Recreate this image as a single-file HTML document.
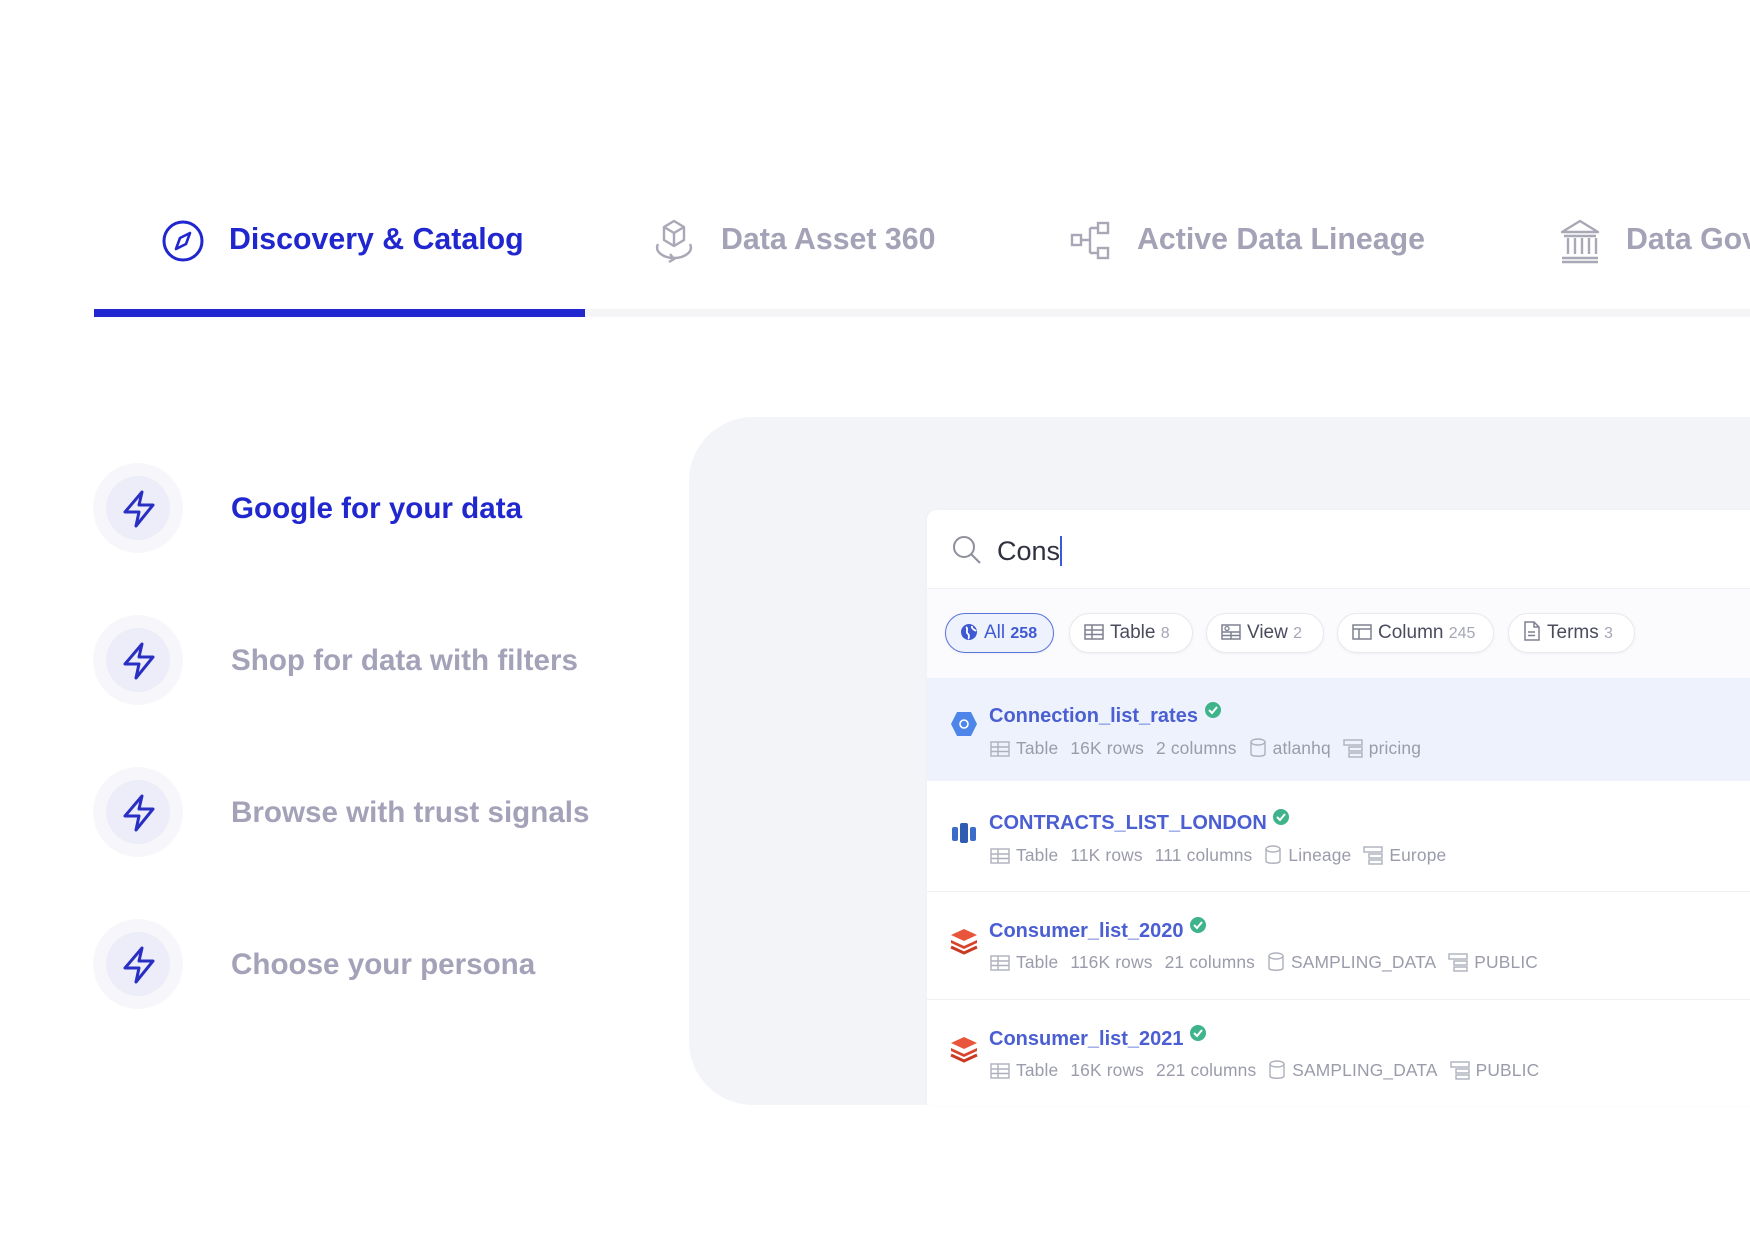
<!DOCTYPE html>
<html><head><meta charset="utf-8"><style>
*{margin:0;padding:0;box-sizing:border-box}
body{width:1750px;height:1242px;background:#fff;position:relative;overflow:hidden;font-family:"Liberation Sans",sans-serif}
.abs{position:absolute}
.tab{position:absolute;top:220px;font-size:30.3px;font-weight:bold;color:#a3a2b6;white-space:nowrap;line-height:40px}
.ic{position:absolute}
.item{position:absolute;left:231px;font-size:29.6px;font-weight:bold;color:#a3a2b8;line-height:40px}
.circ{position:absolute;left:93px;width:90px;height:90px;border-radius:50%;background:#f7f7fb}
.circ div{position:absolute;left:13px;top:13px;width:64px;height:64px;border-radius:50%;background:#ecedf9}
.circ svg{position:absolute;left:28px;top:27px}
.chip{position:absolute;top:613px;height:40px;border:1.5px solid #e8e9ee;border-radius:20px;background:#fff;font-size:19px;color:#4a4c5e;line-height:37px;padding-left:14px;white-space:nowrap;box-shadow:0 1px 3px rgba(0,0,0,.05)}
.chip span{color:#a5a7b5;font-size:16px}
.chip svg{vertical-align:-3px;margin-right:6px}
.title{position:absolute;left:989px;font-size:20px;color:#4b5fd3;font-weight:bold;line-height:24px}
.meta{position:absolute;left:990px;font-size:17.4px;color:#9a9cab;line-height:22px;white-space:nowrap;letter-spacing:0.15px}
.meta svg{vertical-align:-4px;margin-right:6px}
.meta b{font-weight:normal;margin-right:12px}
.sep{position:absolute;left:927px;right:0;height:1px;background:#eef0f3}
</style></head><body>

<svg class="ic" style="left:161px;top:219px" width="44" height="44" viewBox="0 0 44 44"><circle cx="22" cy="22" r="19" fill="none" stroke="#2127cf" stroke-width="3"/><path d="M29 14 L25 25 L15 30 L19 19 Z" fill="none" stroke="#2127cf" stroke-width="2.6" stroke-linejoin="round"/></svg>
<div class="tab" style="left:229px;color:#2127cf">Discovery &amp; Catalog</div>

<svg class="ic" style="left:650px;top:218px" width="48" height="46" viewBox="0 0 48 46"><path d="M24 3 L34 9 L34 22 L24 28 L14 22 L14 9 Z M14 9 L24 15 L34 9 M24 15 L24 28" fill="none" stroke="#a8a8b6" stroke-width="2.4" stroke-linejoin="round"/><path d="M8 26 C4 34 14 40 24 40 C34 40 44 34 40 26 M20 36 L24 41 L19 44" fill="none" stroke="#a8a8b6" stroke-width="2.4"/></svg>
<div class="tab" style="left:721px">Data Asset 360</div>

<svg class="ic" style="left:1070px;top:220px" width="42" height="42" viewBox="0 0 42 42"><rect x="2" y="15" width="9" height="10" fill="none" stroke="#a8a8b6" stroke-width="2.4"/><rect x="28" y="3" width="10" height="10" fill="none" stroke="#a8a8b6" stroke-width="2.4"/><rect x="28" y="28" width="10" height="10" fill="none" stroke="#a8a8b6" stroke-width="2.4"/><path d="M11 20 H20 M20 8 V33 M20 8 H28 M20 33 H28" fill="none" stroke="#a8a8b6" stroke-width="2.4"/></svg>
<div class="tab" style="left:1137px">Active Data Lineage</div>

<svg class="ic" style="left:1558px;top:218px" width="44" height="46" viewBox="0 0 44 46"><path d="M22 3 L40 14 H4 Z" fill="none" stroke="#a8a8b6" stroke-width="2.4" stroke-linejoin="round"/><path d="M6 18 H38 M10 20 V36 M17 20 V36 M24 20 V36 M31 20 V36 M38 20 V36 M4 40 H40 M4 44 H40" stroke="#a8a8b6" stroke-width="2.4"/></svg>
<div class="tab" style="left:1626px">Data Gov</div>

<div class="abs" style="left:585px;right:0;top:309px;height:8px;background:#f5f5f8"></div>
<div class="abs" style="left:94px;width:491px;top:309px;height:8px;background:#2127cf"></div>

<div class="circ" style="top:463px"><div></div><svg width="36" height="38" viewBox="0 0 36 38"><path d="M21 2 L4 22 H18 L15 36 L32 15 H18 Z" fill="none" stroke="#2a2fc4" stroke-width="3" stroke-linejoin="round"/></svg></div>
<div class="item" style="top:489px;color:#2127cf">Google for your data</div>
<div class="circ" style="top:615px"><div></div><svg width="36" height="38" viewBox="0 0 36 38"><path d="M21 2 L4 22 H18 L15 36 L32 15 H18 Z" fill="none" stroke="#2a2fc4" stroke-width="3" stroke-linejoin="round"/></svg></div>
<div class="item" style="top:641px">Shop for data with filters</div>
<div class="circ" style="top:767px"><div></div><svg width="36" height="38" viewBox="0 0 36 38"><path d="M21 2 L4 22 H18 L15 36 L32 15 H18 Z" fill="none" stroke="#2a2fc4" stroke-width="3" stroke-linejoin="round"/></svg></div>
<div class="item" style="top:793px">Browse with trust signals</div>
<div class="circ" style="top:919px"><div></div><svg width="36" height="38" viewBox="0 0 36 38"><path d="M21 2 L4 22 H18 L15 36 L32 15 H18 Z" fill="none" stroke="#2a2fc4" stroke-width="3" stroke-linejoin="round"/></svg></div>
<div class="item" style="top:945px">Choose your persona</div>

<div class="abs" style="left:689px;top:417px;width:1200px;height:688px;background:#f3f4f8;border-radius:64px 0 0 64px"></div>
<div class="abs" style="left:927px;top:510px;width:900px;height:595px;background:#fff;border-radius:10px 0 0 0;box-shadow:0 0 4px rgba(0,0,0,.03)"></div>
<div class="abs" style="left:927px;top:588px;right:0;height:90px;background:#fbfbfd;border-top:1px solid #f0f1f4"></div>
<svg class="ic" style="left:951px;top:534px" width="32" height="32" viewBox="0 0 32 32"><circle cx="13" cy="13" r="10" fill="none" stroke="#8e8f9c" stroke-width="2"/><path d="M20.5 20.5 L29 29" stroke="#8e8f9c" stroke-width="2"/></svg>
<div class="abs" style="left:997px;top:533px;font-size:27px;color:#2f3140;line-height:36px">Cons<span style="display:inline-block;width:2px;height:30px;background:#3a5bd8;vertical-align:-6px"></span></div>

<div class="chip" style="left:945px;width:109px;border-color:#5a73dc;background:#eef2fd;color:#3f59d4">
<svg width="18" height="18" viewBox="0 0 18 18"><circle cx="9" cy="9" r="8" fill="#3f59d4"/><path d="M6 4 C9 6 5 9 8 11 C10 12 8 15 9 16 M12 3 C11 6 15 7 16 8" stroke="#fff" stroke-width="1.8" fill="none"/></svg>All <span style="color:#3f59d4;font-weight:bold">258</span></div>
<div class="chip" style="left:1069px;width:124px"><svg width="20" height="18" viewBox="0 0 20 18"><rect x="1" y="2" width="18" height="14" fill="none" stroke="#7e8091" stroke-width="1.5"/><path d="M1 7 H19 M1 11.5 H19 M8 2 V16" stroke="#7e8091" stroke-width="1.5"/></svg>Table <span>8</span></div>
<div class="chip" style="left:1206px;width:118px"><svg width="20" height="18" viewBox="0 0 20 18"><rect x="1" y="2" width="18" height="14" fill="none" stroke="#7e8091" stroke-width="1.5"/><path d="M1 9 H19 M10 9 V16 M1 12.5 H19" stroke="#7e8091" stroke-width="1.5"/><circle cx="6" cy="5.5" r="2" fill="none" stroke="#7e8091" stroke-width="1.3"/></svg>View <span>2</span></div>
<div class="chip" style="left:1337px;width:157px"><svg width="20" height="18" viewBox="0 0 20 18"><rect x="1" y="2" width="18" height="14" fill="none" stroke="#7e8091" stroke-width="1.5"/><path d="M1 6 H19 M7 6 V16" stroke="#7e8091" stroke-width="1.5"/></svg>Column <span>245</span></div>
<div class="chip" style="left:1508px;width:127px"><svg width="18" height="20" viewBox="0 0 18 20"><path d="M2 1 H11 L16 6 V19 H2 Z M11 1 V6 H16 M5 11 H12 M5 14.5 H12" fill="none" stroke="#7e8091" stroke-width="1.5"/></svg>Terms <span>3</span></div>

<div class="abs" style="left:927px;top:678px;right:0;height:103px;background:#eef2fc"></div>
<div class="sep" style="top:891px"></div>
<div class="sep" style="top:999px"></div>

<svg class="ic" style="left:950px;top:710px" width="28" height="28" viewBox="0 0 28 28"><path d="M7 2 H21 L27 14 L21 26 H7 L1 14 Z" fill="#4d86e8"/><circle cx="14" cy="14" r="4" fill="none" stroke="#fff" stroke-width="1.6"/></svg>
<div class="title" style="top:701px">Connection_list_rates <svg width="18" height="18" viewBox="0 0 18 18" style="vertical-align:3px"><circle cx="9" cy="9" r="8" fill="#3fb38a"/><path d="M5 9 L8 12 L13 6" stroke="#fff" stroke-width="2" fill="none"/></svg></div>
<div class="meta" style="top:737px"><svg width="20" height="18" viewBox="0 0 20 18"><rect x="1" y="2" width="18" height="14" fill="none" stroke="#aeb0bd" stroke-width="1.4"/><path d="M1 7 H19 M1 11.5 H19 M8 2 V16" stroke="#aeb0bd" stroke-width="1.4"/></svg><b>Table</b><b>16K rows</b><b>2 columns</b><svg width="18" height="20" viewBox="0 0 18 20"><ellipse cx="9" cy="4" rx="7" ry="3" fill="none" stroke="#aeb0bd" stroke-width="1.4"/><path d="M2 4 V16 C2 19 16 19 16 16 V4" fill="none" stroke="#aeb0bd" stroke-width="1.4"/></svg><b>atlanhq</b><svg width="20" height="20" viewBox="0 0 20 20"><rect x="1" y="2" width="18" height="5" fill="none" stroke="#aeb0bd" stroke-width="1.4"/><rect x="6" y="9" width="13" height="4" fill="none" stroke="#aeb0bd" stroke-width="1.4"/><rect x="6" y="15" width="13" height="4" fill="none" stroke="#aeb0bd" stroke-width="1.4"/></svg><b>pricing</b></div>

<svg class="ic" style="left:951px;top:820px" width="26" height="26" viewBox="0 0 26 26"><rect x="1" y="7" width="6" height="14" rx="2" fill="#3b6cc9"/><rect x="9" y="3" width="8" height="20" rx="2" fill="#2f5bb0"/><rect x="19" y="7" width="6" height="14" rx="2" fill="#3b6cc9"/></svg>
<div class="title" style="top:808px">CONTRACTS_LIST_LONDON <svg width="18" height="18" viewBox="0 0 18 18" style="vertical-align:3px"><circle cx="9" cy="9" r="8" fill="#3fb38a"/><path d="M5 9 L8 12 L13 6" stroke="#fff" stroke-width="2" fill="none"/></svg></div>
<div class="meta" style="top:844px"><svg width="20" height="18" viewBox="0 0 20 18"><rect x="1" y="2" width="18" height="14" fill="none" stroke="#aeb0bd" stroke-width="1.4"/><path d="M1 7 H19 M1 11.5 H19 M8 2 V16" stroke="#aeb0bd" stroke-width="1.4"/></svg><b>Table</b><b>11K rows</b><b>111 columns</b><svg width="18" height="20" viewBox="0 0 18 20"><ellipse cx="9" cy="4" rx="7" ry="3" fill="none" stroke="#aeb0bd" stroke-width="1.4"/><path d="M2 4 V16 C2 19 16 19 16 16 V4" fill="none" stroke="#aeb0bd" stroke-width="1.4"/></svg><b>Lineage</b><svg width="20" height="20" viewBox="0 0 20 20"><rect x="1" y="2" width="18" height="5" fill="none" stroke="#aeb0bd" stroke-width="1.4"/><rect x="6" y="9" width="13" height="4" fill="none" stroke="#aeb0bd" stroke-width="1.4"/><rect x="6" y="15" width="13" height="4" fill="none" stroke="#aeb0bd" stroke-width="1.4"/></svg><b>Europe</b></div>

<svg class="ic" style="left:950px;top:927px" width="28" height="28" viewBox="0 0 28 28"><path d="M14 2 L27 8 L14 14 L1 8 Z" fill="#e8553a"/><path d="M1 13 L14 19 L27 13 L27 16 L14 22 L1 16 Z" fill="#d9442b"/><path d="M1 20 L14 26 L27 20" fill="none" stroke="#c93a22" stroke-width="3"/></svg>
<div class="title" style="top:916px">Consumer_list_2020 <svg width="18" height="18" viewBox="0 0 18 18" style="vertical-align:3px"><circle cx="9" cy="9" r="8" fill="#3fb38a"/><path d="M5 9 L8 12 L13 6" stroke="#fff" stroke-width="2" fill="none"/></svg></div>
<div class="meta" style="top:951px"><svg width="20" height="18" viewBox="0 0 20 18"><rect x="1" y="2" width="18" height="14" fill="none" stroke="#aeb0bd" stroke-width="1.4"/><path d="M1 7 H19 M1 11.5 H19 M8 2 V16" stroke="#aeb0bd" stroke-width="1.4"/></svg><b>Table</b><b>116K rows</b><b>21 columns</b><svg width="18" height="20" viewBox="0 0 18 20"><ellipse cx="9" cy="4" rx="7" ry="3" fill="none" stroke="#aeb0bd" stroke-width="1.4"/><path d="M2 4 V16 C2 19 16 19 16 16 V4" fill="none" stroke="#aeb0bd" stroke-width="1.4"/></svg><b>SAMPLING_DATA</b><svg width="20" height="20" viewBox="0 0 20 20"><rect x="1" y="2" width="18" height="5" fill="none" stroke="#aeb0bd" stroke-width="1.4"/><rect x="6" y="9" width="13" height="4" fill="none" stroke="#aeb0bd" stroke-width="1.4"/><rect x="6" y="15" width="13" height="4" fill="none" stroke="#aeb0bd" stroke-width="1.4"/></svg><b>PUBLIC</b></div>

<svg class="ic" style="left:950px;top:1035px" width="28" height="28" viewBox="0 0 28 28"><path d="M14 2 L27 8 L14 14 L1 8 Z" fill="#e8553a"/><path d="M1 13 L14 19 L27 13 L27 16 L14 22 L1 16 Z" fill="#d9442b"/><path d="M1 20 L14 26 L27 20" fill="none" stroke="#c93a22" stroke-width="3"/></svg>
<div class="title" style="top:1024px">Consumer_list_2021 <svg width="18" height="18" viewBox="0 0 18 18" style="vertical-align:3px"><circle cx="9" cy="9" r="8" fill="#3fb38a"/><path d="M5 9 L8 12 L13 6" stroke="#fff" stroke-width="2" fill="none"/></svg></div>
<div class="meta" style="top:1059px"><svg width="20" height="18" viewBox="0 0 20 18"><rect x="1" y="2" width="18" height="14" fill="none" stroke="#aeb0bd" stroke-width="1.4"/><path d="M1 7 H19 M1 11.5 H19 M8 2 V16" stroke="#aeb0bd" stroke-width="1.4"/></svg><b>Table</b><b>16K rows</b><b>221 columns</b><svg width="18" height="20" viewBox="0 0 18 20"><ellipse cx="9" cy="4" rx="7" ry="3" fill="none" stroke="#aeb0bd" stroke-width="1.4"/><path d="M2 4 V16 C2 19 16 19 16 16 V4" fill="none" stroke="#aeb0bd" stroke-width="1.4"/></svg><b>SAMPLING_DATA</b><svg width="20" height="20" viewBox="0 0 20 20"><rect x="1" y="2" width="18" height="5" fill="none" stroke="#aeb0bd" stroke-width="1.4"/><rect x="6" y="9" width="13" height="4" fill="none" stroke="#aeb0bd" stroke-width="1.4"/><rect x="6" y="15" width="13" height="4" fill="none" stroke="#aeb0bd" stroke-width="1.4"/></svg><b>PUBLIC</b></div>

</body></html>
